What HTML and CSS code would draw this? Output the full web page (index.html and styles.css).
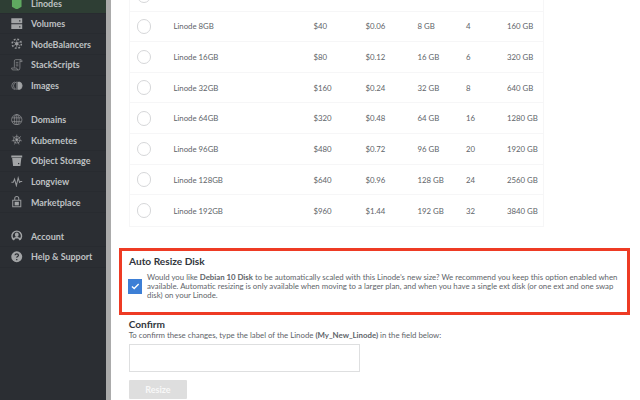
FILE: index.html
```html
<!DOCTYPE html>
<html lang="en">
<head>
<meta charset="utf-8">
<title>Resize Linode</title>
<link rel="stylesheet" href="styles.css">
</head>
<body>
<div class="app">
  <nav class="sidebar">
    <div class="group">
      <a class="item active"><svg class="icon" viewBox="0 0 12 12"><path class="green" d="M1 2 6 0l5 2v7.2L6 12 1 9.2z"/></svg><span>Linodes</span></a>
      <a class="item"><svg class="icon" viewBox="0 0 12 12"><path class="fill" d="M.3.3h11.4v5.200H.3zM.3 6.500h11.4v5.200H.3z"/><path class="dark" d="M8.500 2.400h1.300v1.300H8.500zM8.500 8.600h1.300v1.300H8.500z"/></svg><span>Volumes</span></a>
      <a class="item"><svg class="icon" viewBox="0 0 12 12"><circle class="dots" cx="6" cy="6" r="4.800"/><circle class="fill" cx="6" cy="6" r="1.700"/><path class="line" d="M6 2v8M2.500 4l7 4M2.500 8l7-4"/></svg><span>NodeBalancers</span></a>
      <a class="item"><svg class="icon" viewBox="0 0 12 12"><path class="line" d="M3.500 9V2Q3.500.7 4.800.7h5.500q1.300 0 1.300 2H9.300V9.500q0 1.900-1.600 1.900H2Q.6 11.400.6 9.400h5.400q0 2 1.600 2M10.300.7Q9.300.7 9.300 2.700M5 3.500h2.700M5 5.300h2.700M5 7.100h2.700"/></svg><span>StackScripts</span></a>
      <a class="item"><svg class="icon" viewBox="0 0 12 12"><path class="line" d="M4 2a4.100 4.100 0 0 0 0 8M5.800 2a4.100 4.100 0 0 0 0 8z"/><path class="fill" d="M6.500 1.800h1a4.200 4.200 0 0 1 0 8.400h-1z"/><path class="line" d="M8.500 2a4.100 4.100 0 0 1 0 8"/><path class="slit" d="M6.300 1.500v9"/></svg><span>Images</span></a>
    </div>
    <div class="group">
      <a class="item"><svg class="icon" viewBox="0 0 12 12"><circle class="line" cx="6" cy="6" r="5.400"/><ellipse class="line" cx="6" cy="6" rx="2.500" ry="5.400"/><path class="line" d="M6 .6v10.800M1.100 4h9.800M1.100 8h9.800"/></svg><span>Domains</span></a>
      <a class="item"><svg class="icon" viewBox="0 0 12 12"><circle class="line" cx="6" cy="6" r="3.500"/><path class="line" d="M6 .6V6m0 0 4.300-3.500M6 6l5.300 1.200M6 6l2.400 4.900M6 6l-2.400 4.900M6 6 .7 7.200M6 6 1.700 2.500"/><circle class="fill" cx="6" cy="6" r="1.200"/></svg><span>Kubernetes</span></a>
      <a class="item"><svg class="icon" viewBox="0 0 12 12"><path class="fill" d="M.3.600h11.400v2H.3zM1.200 3.100h9.600l-1 8.300H2.200z"/><path class="dark" d="M7.300 8.300h1.300v1.300H7.300z"/></svg><span>Object Storage</span></a>
      <a class="item"><svg class="icon" viewBox="0 0 12 12"><path class="line strong" d="M.4 6.500h2l1.300-3.200L5.600 10 7.500 2l1.400 4.600 1-.8h1.800"/></svg><span>Longview</span></a>
      <a class="item"><svg class="icon" viewBox="0 0 12 12"><path class="line strong" d="M3.900 4.300V2.700a2.100 2.100 0 0 1 4.200 0v1.600"/><path class="line strong" d="M1.800 4.500h8.400v6.800H1.800z"/><path class="fill" d="M3.800 6h4.400v3.800H3.800z"/></svg><span>Marketplace</span></a>
    </div>
    <div class="group">
      <a class="item"><svg class="icon" viewBox="0 0 12 12"><path class="ring" d="M3 10.200a5 5 0 1 1 6 0"/><ellipse class="fill" cx="6" cy="5" rx="2" ry="2.400"/><path class="fill" d="M1.500 9.300Q2.500 7.600 5 7.200h2q2.500.4 3.500 2.100L9 11 7.500 8.800h-3L3 11z"/></svg><span>Account</span></a>
      <a class="item"><svg class="icon" viewBox="0 0 12 12"><circle class="fill" cx="6" cy="6" r="5.700"/><path class="mark" d="M4.200 4.500q.1-1.600 1.800-1.600 1.800 0 1.800 1.500 0 .9-1 1.400-.8.400-.8 1.300M6 8.300v1.300"/></svg><span>Help &amp; Support</span></a>
    </div>
  </nav>
  <div class="gutter"></div>
  <main class="content">
    <div class="plans">
      <div class="row"><i class="radio"></i></div>
      <div class="row"><i class="radio"></i><span>Linode 8GB</span><span>$40</span><span>$0.06</span><span>8 GB</span><span>4</span><span>160 GB</span></div>
      <div class="row"><i class="radio"></i><span>Linode 16GB</span><span>$80</span><span>$0.12</span><span>16 GB</span><span>6</span><span>320 GB</span></div>
      <div class="row"><i class="radio"></i><span>Linode 32GB</span><span>$160</span><span>$0.24</span><span>32 GB</span><span>8</span><span>640 GB</span></div>
      <div class="row"><i class="radio"></i><span>Linode 64GB</span><span>$320</span><span>$0.48</span><span>64 GB</span><span>16</span><span>1280 GB</span></div>
      <div class="row"><i class="radio"></i><span>Linode 96GB</span><span>$480</span><span>$0.72</span><span>96 GB</span><span>20</span><span>1920 GB</span></div>
      <div class="row"><i class="radio"></i><span>Linode 128GB</span><span>$640</span><span>$0.96</span><span>128 GB</span><span>24</span><span>2560 GB</span></div>
      <div class="row"><i class="radio"></i><span>Linode 192GB</span><span>$960</span><span>$1.44</span><span>192 GB</span><span>32</span><span>3840 GB</span></div>
    </div>
    <section class="auto-resize">
      <h2>Auto Resize Disk</h2>
      <div class="option">
        <span class="checkbox"><svg viewBox="0 0 14 14"><path d="M3.800 7.200 6 9.200l4.300-4.400"/></svg></span>
        <p>Would you like <b>Debian 10 Disk</b> to be automatically scaled with this Linode’s new size? We recommend you keep this option enabled when<br>available. Automatic resizing is only available when moving to a larger plan, and when you have a single ext disk (or one ext and one swap<br>disk) on your Linode.</p>
      </div>
    </section>
    <section class="confirm">
      <h2>Confirm</h2>
      <p>To confirm these changes, type the label of the Linode <b>(My_New_Linode)</b> in the field below:</p>
      <div class="field"></div>
      <div class="button">Resize</div>
    </section>
  </main>
</div>
</body>
</html>
```
FILE: styles.css
```css
* { box-sizing: border-box; }
body {
  margin: 0;
  font-family: Lato, "Liberation Sans", sans-serif;
  color: #606469;
  background: #fff;
}
.app { display: flex; width: 640px; height: 400px; overflow: hidden; }

.sidebar {
  width: 106px;
  flex: none;
  height: 400px;
  background: #2b2e33;
  display: flex;
  flex-direction: column;
  gap: 13.4px;
  overflow: hidden;
}
.group:first-child { margin-top: -6.900px; }
.item {
  display: flex;
  align-items: center;
  height: 20.65px;
  padding-left: 11px;
  gap: 8.500px;
  border-bottom: 1px solid #282b30;
  color: #bfc1c3;
  font-size: 8.950px;
  font-weight: 700;
  white-space: nowrap;
}
.item.active { background: #2e3e34; padding-top: 1px; }
.icon { width: 11.500px; height: 11.500px; flex: none; }
.fill { fill: #a2a4a6; }
.green { fill: #5fa860; }
.dark { fill: #2b2e33; }
.line { fill: none; stroke: #96989b; stroke-width: .7; }
.strong { stroke-width: 1.100; }
.dots { fill: none; stroke: #96989b; stroke-width: 1.600; stroke-dasharray: 1.900 1.870; }
.ring { fill: none; stroke: #a2a4a6; stroke-width: 1.500; }
.slit { stroke: #2b2e33; stroke-width: .5; }
.mark { fill: none; stroke: #2b2e33; stroke-width: 1.300; }

.gutter { width: 5px; flex: none; background: #ababab; }

.content { flex: 1; min-width: 0; padding-left: 8px; }
.plans {
  width: 415.500px;
  margin: -19.100px 0 0 9.600px;
  border: 1px solid #f6f6f7;
  border-top: 0;
}
.row {
  display: grid;
  grid-template-columns: 43.800px 140px 52px 52px 48.500px 41px 1fr;
  align-items: center;
  height: 30.650px;
  border-bottom: 1px solid #f6f6f7;
  font-size: 7.820px;
  white-space: nowrap;
}
.row:last-child { border-bottom: 0; }
.radio {
  width: 14.500px;
  height: 14.500px;
  margin-left: 7.400px;
  border: 1px solid #d6d7d9;
  border-radius: 50%;
}

h2 { margin: 0; font-size: 10.150px; line-height: 13px; font-weight: 700; color: #32363c; }
p { margin: 0; white-space: nowrap; }
.auto-resize {
  width: 510.500px;
  height: 67px;
  margin-top: 21px;
  border: 3px solid #ee3b24;
  padding: 4px 0 0 7px;
}
.option { display: flex; align-items: center; gap: 5px; margin-top: 5px; }
.option p { font-size: 7.820px; line-height: 9px; }
.checkbox { width: 14.500px; height: 14.500px; flex: none; background: #3d7fd6; margin-left: -1.500px; }
.checkbox svg { display: block; }
.checkbox path { fill: none; stroke: #fff; stroke-width: 1.300; }

.confirm { padding: 3.400px 0 0 9.700px; }
.confirm p { font-size: 7.820px; line-height: 9px; }
.field { width: 231.500px; height: 27.500px; margin-top: 4px; border: 1px solid #dedfe0; }
.button {
  width: 58.500px;
  height: 19px;
  margin-top: 8.500px;
  border-radius: 1px;
  background: #dedede;
  color: #f8f8f8;
  font-size: 9px;
  font-weight: 700;
  line-height: 19px;
  text-align: center;
}
```
